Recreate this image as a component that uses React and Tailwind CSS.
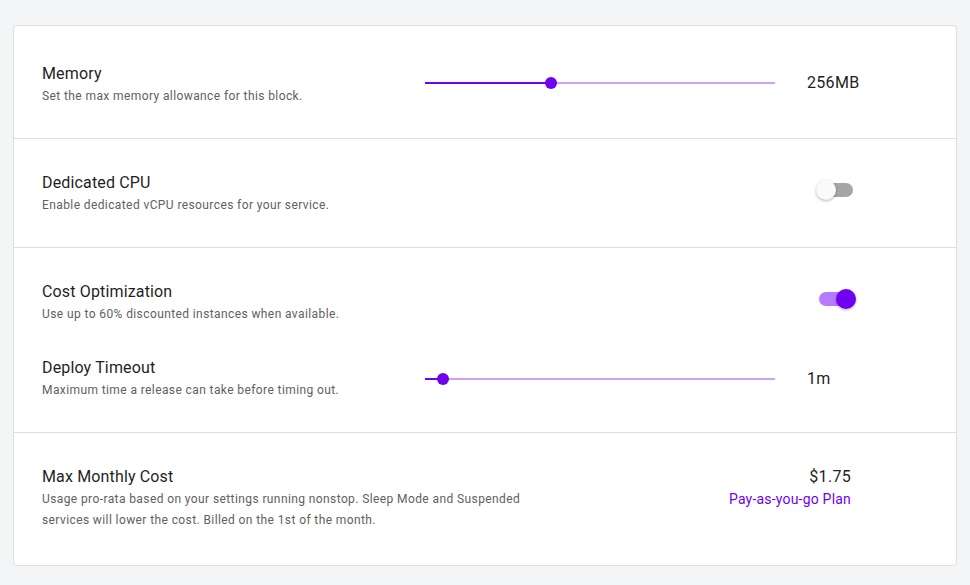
import React, { useState } from 'react';

const Slider = ({ percent }) => {
    return (
        <div className="relative w-[350px] h-[12px] flex items-center">
            <div className="w-full h-[2px] bg-[#cda0fd]"></div>
            <div className="absolute left-0 h-[2px] bg-[#7000f0]" style={{ width: percent + '%' }}></div>
            <div
                className="absolute w-[12px] h-[12px] rounded-full bg-[#7000f0] -ml-[6px]"
                style={{ left: percent + '%' }}
            ></div>
        </div>
    );
};

const Toggle = ({ on, onClick }) => {
    return (
        <button onClick={onClick} className="relative w-[40px] h-[20px] flex items-center">
            <span className={'absolute left-[3px] w-[34px] h-[14px] rounded-full ' + (on ? 'bg-[#b57bfd]' : 'bg-[#a6a6a6]')}></span>
            <span
                className={
                    'absolute top-0 w-[20px] h-[20px] rounded-full shadow-[0_1px_3px_rgba(0,0,0,0.3)] ' +
                    (on ? 'left-[20px] bg-[#7000f0]' : 'left-0 bg-[#fafafa]')
                }
            ></span>
        </button>
    );
};

const Label = ({ title, desc }) => (
    <div>
        <div className="text-[16px] leading-[22px] text-[#1f1f1f] tracking-[0.15px]">{title}</div>
        <div className="mt-[1px] text-[12px] leading-[21px] text-[#616161] tracking-[0.4px]">{desc}</div>
    </div>
);

export default function App() {
    const [dedicated, setDedicated] = useState(false);
    const [costOpt, setCostOpt] = useState(true);

    return (
        <div className="min-h-[585px] bg-[#f4f5f7] pt-[25px] px-[13px] pb-[19px]" style={{ fontFamily: 'Roboto, "Liberation Sans", sans-serif' }}>
            <div className="bg-white border border-[#dedede] rounded-[4px]">
                <div className="flex items-start px-[28px] pt-[37px] pb-[31px]">
                    <div className="flex-1">
                        <Label title="Memory" desc="Set the max memory allowance for this block." />
                    </div>
                    <div className="mt-[14px]">
                        <Slider percent={36} />
                    </div>
                    <div className="mt-[9px] w-[153px] pl-[32px] text-[16px] leading-[22px] text-[#1f1f1f] tracking-[0.3px]">256MB</div>
                </div>

                <div className="flex items-start px-[28px] pt-[33px] pb-[31px] border-t border-[#dedede]">
                    <div className="flex-1">
                        <Label title="Dedicated CPU" desc="Enable dedicated vCPU resources for your service." />
                    </div>
                    <div className="w-[153px] pl-[41px] mt-[8px]">
                        <Toggle on={dedicated} onClick={() => setDedicated(!dedicated)} />
                    </div>
                </div>

                <div className="px-[28px] pt-[33px] pb-[31px] border-t border-[#dedede]">
                    <div className="flex items-start">
                        <div className="flex-1">
                            <Label title="Cost Optimization" desc="Use up to 60% discounted instances when available." />
                        </div>
                        <div className="w-[153px] pl-[41px] mt-[8px]">
                            <Toggle on={costOpt} onClick={() => setCostOpt(!costOpt)} />
                        </div>
                    </div>
                    <div className="flex items-start mt-[32px]">
                        <div className="flex-1">
                            <Label title="Deploy Timeout" desc="Maximum time a release can take before timing out." />
                        </div>
                        <div className="mt-[16px]">
                            <Slider percent={5} />
                        </div>
                        <div className="mt-[11px] w-[153px] pl-[32px] text-[16px] leading-[22px] text-[#1f1f1f] tracking-[0.3px]">1m</div>
                    </div>
                </div>

                <div className="flex items-start px-[28px] pt-[33px] pb-[34px] border-t border-[#dedede]">
                    <div className="flex-1">
                        <div className="text-[16px] leading-[22px] text-[#1f1f1f] tracking-[0.15px]">Max Monthly Cost</div>
                        <div className="mt-[1px] text-[12px] leading-[21px] text-[#616161] tracking-[0.4px] w-[490px]">
                            Usage pro-rata based on your settings running nonstop. Sleep Mode and Suspended services will lower the cost. Billed on the 1st of the month.
                        </div>
                    </div>
                    <div className="text-right pr-[77px]">
                        <div className="text-[16px] leading-[22px] text-[#1f1f1f] tracking-[0.3px]">$1.75</div>
                        <div className="mt-[1px] text-[14px] leading-[21px] text-[#7000f0] tracking-[0.2px]">Pay-as-you-go Plan</div>
                    </div>
                </div>
            </div>
        </div>
    );
}
